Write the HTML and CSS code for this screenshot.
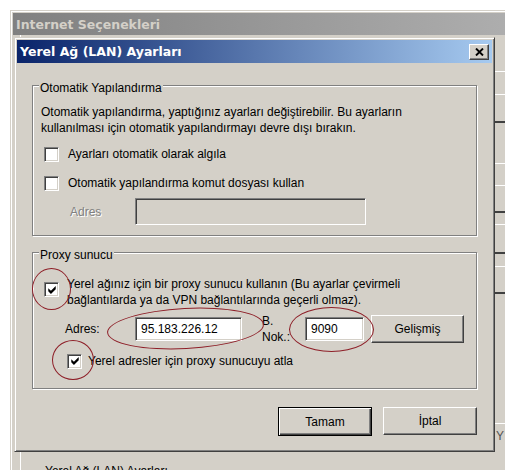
FILE: index.html
```html
<!DOCTYPE html>
<html lang="tr">
<head>
<meta charset="utf-8">
<title>Yerel Ağ (LAN) Ayarları</title>
<link rel="stylesheet" href="styles.css">
</head>
<body>
<div class="desktop">
  <div class="window bg-window">
    <div class="titlebar inactive"><span class="title-text">Internet Seçenekleri</span></div>
    <div class="bg-body">
      <div class="bg-main">
        <div class="tabpage">
          <div class="bg-group-label">Yerel Ağ (LAN) Ayarları</div>
        </div>
      </div>
      <div class="bg-strip"><span class="strip-text">Y</span></div>
    </div>
  </div>

  <div class="window dialog">
    <div class="titlebar active">
      <span class="title-text">Yerel Ağ (LAN) Ayarları</span>
      <button class="close-btn" aria-label="Kapat">
        <svg width="9" height="8" viewBox="0 0 9 8"><path d="M1 0.5 L8 7.5 M8 0.5 L1 7.5" stroke="#000" stroke-width="1.9" fill="none"/></svg>
      </button>
    </div>
    <div class="dialog-body">
      <div class="group group-auto">
        <div class="group-title">Otomatik Yapılandırma</div>
        <p class="desc">Otomatik yapılandırma, yaptığınız ayarları değiştirebilir. Bu ayarların<br>kullanılması için otomatik yapılandırmayı devre dışı bırakın.</p>
        <div class="check-row row-detect"><span class="checkbox"></span><span class="check-text">Ayarları otomatik olarak algıla</span></div>
        <div class="check-row row-script"><span class="checkbox"></span><span class="check-text">Otomatik yapılandırma komut dosyası kullan</span></div>
        <div class="field-row row-script-addr">
          <span class="disabled-label">Adres</span>
          <span class="textbox disabled wide"></span>
        </div>
      </div>

      <div class="group group-proxy">
        <div class="group-title">Proxy sunucu</div>
        <div class="check-row multi row-use-proxy">
          <span class="checkbox"><svg width="8" height="8" viewBox="0 0 7 7.5"><polygon points="0,2 2.5,4.5 7,0 7,3 2.5,7.5 0,5" fill="#000"/></svg></span>
          <span class="check-text">Yerel ağınız için bir proxy sunucu kullanın (Bu ayarlar çevirmeli<br>bağlantılarda ya da VPN bağlantılarında geçerli olmaz).</span>
        </div>
        <div class="field-row row-proxy-addr">
          <span class="field-label">Adres:</span>
          <span class="textbox addr">95.183.226.12</span>
          <span class="port-label">B.<br>Nok.:</span>
          <span class="textbox port">9090</span>
          <button class="btn adv">Gelişmiş</button>
        </div>
        <div class="check-row row-bypass">
          <span class="checkbox"><svg width="8" height="8" viewBox="0 0 7 7.5"><polygon points="0,2 2.5,4.5 7,0 7,3 2.5,7.5 0,5" fill="#000"/></svg></span>
          <span class="check-text">Yerel adresler için proxy sunucuyu atla</span>
        </div>
      </div>

      <div class="button-row">
        <button class="btn default">Tamam</button>
        <button class="btn">İptal</button>
      </div>
    </div>

    <span class="annot annot-a"></span>
    <span class="annot annot-b"></span>
    <span class="annot annot-c"></span>
    <span class="annot annot-d"></span>
  </div>
</div>
</body>
</html>
```

FILE: styles.css
```css
html, body {
  margin: 0;
  padding: 0;
  overflow: hidden;
  background: #fff;
}

body {
  width: 505px;
  height: 470px;
  font-family: "Liberation Sans", Arial, sans-serif;
  font-size: 12px;
  color: #000;
}

.desktop {
  position: relative;
  width: 505px;
  height: 470px;
  overflow: hidden;
  background: #fff;
}

.window {
  position: absolute;
  box-sizing: border-box;
  background: #d4d0c8;
  border: 1px solid;
  border-color: #d4d0c8 #404040 #404040 #d4d0c8;
  box-shadow: inset 1px 1px 0 #fff, inset -1px -1px 0 #808080;
  padding: 2px;
  display: flex;
  flex-direction: column;
}

.bg-window {
  left: 10px;
  top: 10px;
  width: 700px;
  height: 600px;
}

.dialog {
  left: 14px;
  top: 37px;
  width: 481px;
  height: 415px;
}

.titlebar {
  display: flex;
  align-items: center;
  flex: none;
  padding: 0 3px;
  font-family: "DejaVu Sans", sans-serif;
  font-weight: bold;
  font-size: 12.5px;
  white-space: nowrap;
}

.inactive {
  height: 22px;
  background: linear-gradient(to right, #808080, #c0c0c0);
  color: #d4d0c8;
}

.active {
  height: 23px;
  background: linear-gradient(to right, #0a246a, #a6caf0);
  color: #fff;
}

.close-btn {
  margin-left: auto;
  box-sizing: border-box;
  width: 20px;
  height: 16px;
  padding: 0;
  background: #d4d0c8;
  border: 1px solid;
  border-color: #fff #404040 #404040 #fff;
  box-shadow: inset -1px -1px 0 #808080;
  display: flex;
  align-items: center;
  justify-content: center;
}

/* background window */
.bg-body {
  display: flex;
  flex: 1;
}

.bg-main {
  width: 482px;
  flex: none;
}

.tabpage {
  margin-left: 7px;
  border-left: 1px solid #fff;
  padding: 429px 0 0 24px;
  height: 200px;
}

.bg-group-label {
  line-height: 14px;
  white-space: nowrap;
}

.bg-strip {
  flex: 1;
  padding: 394px 0 0 1px;
  line-height: 14px;
  color: #555;
  background: linear-gradient(to bottom,
    transparent 36px, #fff 36px, #fff 37px, transparent 37px,
    transparent 59px, #fff 59px, #fff 60px, transparent 60px,
    transparent 86px, #404040 86px, #404040 88px, transparent 88px,
    transparent 128px, #fff 128px, #fff 129px, transparent 129px,
    transparent 150px, #fff 150px, #fff 151px, transparent 151px,
    transparent 176px, #404040 176px, #404040 178px, transparent 178px,
    transparent 189px, #fff 189px, #fff 190px, transparent 190px,
    transparent 217px, #404040 217px, #404040 219px, transparent 219px,
    transparent 231px, #fff 231px, #fff 232px, transparent 232px,
    transparent 257px, #404040 257px, #404040 259px, transparent 259px,
    transparent 388px, #fff 388px, #fff 389px, transparent 389px);
}

/* dialog body */
.dialog-body {
  display: flex;
  flex-direction: column;
  padding: 22px 15px 0 15px;
}

.group {
  border: 1px solid #808080;
  box-shadow: 1px 1px 0 #fff, inset 1px 1px 0 #fff;
  padding: 0 8px 10px 8px;
}

.group-proxy {
  margin-top: 16px;
  padding-bottom: 19px;
}

.group-title {
  width: fit-content;
  margin: -5px 0 0 -2px;
  padding: 0 1px;
  background: #d4d0c8;
  line-height: 14px;
  white-space: nowrap;
}

.desc {
  margin: 9px 0 0;
  line-height: 16px;
  white-space: nowrap;
}

.check-row {
  display: flex;
  align-items: center;
  height: 16px;
  line-height: 16px;
  white-space: nowrap;
}

.check-row.multi {
  align-items: flex-start;
  height: auto;
}

.row-detect { margin-top: 10px; }
.row-script { margin-top: 13px; }
.row-use-proxy { margin-top: 14px; }
.row-bypass { margin-top: 8px; }

.checkbox {
  flex: none;
  box-sizing: border-box;
  width: 15px;
  height: 15px;
  margin: 0 8px 0 3px;
  border: 1px solid;
  border-color: #808080 #fff #fff #808080;
  box-shadow: inset 1px 1px 0 #404040, inset -1px -1px 0 #d4d0c8;
  background: #fff;
  display: flex;
  align-items: center;
  justify-content: center;
}

.multi .checkbox {
  margin-top: 6px;
}

.row-detect .checkbox { margin-right: 9px; }
.row-script .checkbox { margin-right: 9px; }

.row-bypass .checkbox {
  margin-left: 26px;
  margin-right: 6px;
}

.field-row {
  display: flex;
  align-items: center;
  white-space: nowrap;
}

.row-script-addr { margin-top: 7px; }
.row-proxy-addr { margin-top: 5px; }

.disabled-label {
  width: 65px;
  margin-left: 29px;
  color: #808080;
  text-shadow: 1px 1px 0 #fff;
}

.field-label {
  width: 70px;
  margin-left: 24px;
}

.textbox {
  box-sizing: border-box;
  border: 1px solid;
  border-color: #808080 #fff #fff #808080;
  box-shadow: inset 1px 1px 0 #404040, inset -1px -1px 0 #d4d0c8;
  background: #fff;
  padding: 0 0 0 5px;
  display: flex;
  align-items: center;
  height: 24px;
}

.textbox.disabled {
  background: #d4d0c8;
}

.wide {
  width: 231px;
  height: 27px;
}

.addr {
  width: 107px;
}

.port-label {
  width: 43px;
  margin-left: 20px;
  line-height: 16px;
}

.port {
  width: 59px;
}

.btn {
  box-sizing: border-box;
  width: 94px;
  height: 28px;
  padding: 0;
  background: #d4d0c8;
  border: 1px solid;
  border-color: #fff #404040 #404040 #fff;
  box-shadow: inset -1px -1px 0 #808080;
  font-family: inherit;
  font-size: 12px;
  color: #000;
}

.btn.adv {
  width: 93px;
  margin-left: 7px;
}

.btn.default {
  height: 29px;
  border: 1px solid #000;
  box-shadow: inset 1px 1px 0 #fff, inset -1px -1px 0 #404040, inset -2px -2px 0 #808080;
}

.button-row {
  display: flex;
  justify-content: flex-end;
  align-items: flex-start;
  gap: 11px;
  margin-top: 18px;
}

/* red annotation ellipses drawn over the dialog */
.annot {
  position: absolute;
  border: 1px solid #8e1f28;
  border-radius: 50%;
  pointer-events: none;
}

.annot-a { left: 17px; top: 230px; width: 37px; height: 40px; }
.annot-b { left: 92px; top: 270px; width: 155px; height: 39px; transform: rotate(-3deg); }
.annot-c { left: 274px; top: 269px; width: 83px; height: 43px; }
.annot-d { left: 37px; top: 302px; width: 40px; height: 38px; }
```
